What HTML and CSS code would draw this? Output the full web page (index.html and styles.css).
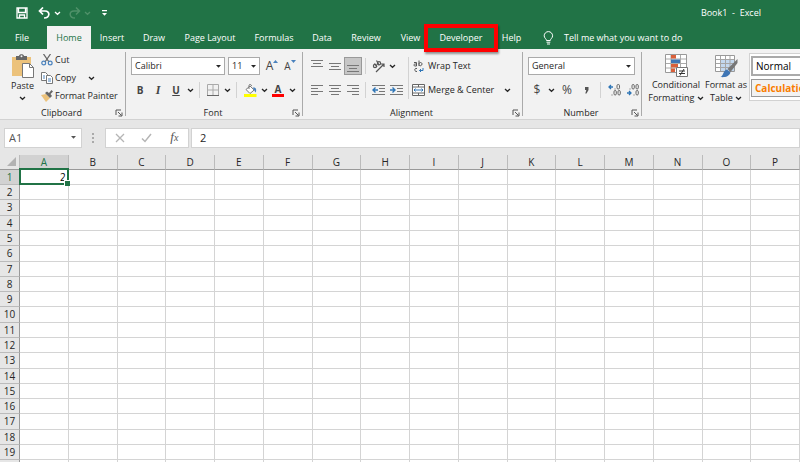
FILE: index.html
```html
<!DOCTYPE html>
<html lang="en">
<head>
    <meta charset="UTF-8">
    <meta name="viewport" content="width=device-width, initial-scale=1.0">
    <title>Book1 - Excel</title>
    <link rel="stylesheet" href="styles.css">
</head>
<body>
    <!-- shared icons -->
    <svg class="sprite" aria-hidden="true">
        <symbol id="caret" viewBox="0 0 7 5"><path d="M1 1l2.500 2.300L6 1" fill="none" stroke="currentColor" stroke-width="1.300"/></symbol>
        <symbol id="drop" viewBox="0 0 7 5"><path d="M1 1h5L3.500 3.800z" fill="currentColor"/></symbol>
        <symbol id="launch" viewBox="0 0 8 8"><path d="M1 6V1h5M3 3l3.500 3.500M7 3.500V7H3.500" fill="none" stroke="#555"/></symbol>
    </svg>

    <header class="titlebar">
        <div class="quick">
            <button class="save" aria-label="Save"><svg width="12" height="12" viewBox="0 0 12 12" fill="none" stroke="#fff" stroke-width="1.300"><path d="M1 1h10v10H1zM2.500 1v4.500h7V1M3.500 11V8h5v3"/></svg></button>
            <button class="undo" aria-label="Undo"><svg width="13" height="12" viewBox="0 0 13 12" fill="none" stroke="#fff" stroke-width="1.700"><path d="M5 .5L1.500 4L5 7.500M1.500 4H7c5.500 0 5 7-1 7"/></svg></button>
            <button class="undo-more" aria-label="Undo list"><svg width="7" height="5"><use href="#caret"/></svg></button>
            <button class="redo" aria-label="Redo"><svg width="13" height="12" viewBox="0 0 13 12" fill="none" stroke="#4f9169" stroke-width="1.500"><path d="M8 .5L11.500 4L8 7.500M11.500 4H6C.5 4 1 11 7 11"/></svg></button>
            <button class="redo-more" aria-label="Redo list"><svg width="7" height="5"><use href="#caret"/></svg></button>
            <button class="customize" aria-label="Customize toolbar"><svg width="7" height="7" viewBox="0 0 7 7" fill="#fff"><path d="M1 0h5v1.200H1zM1 3h5L3.500 5.800z"/></svg></button>
        </div>
        <div class="title">Book1&nbsp; -&nbsp; Excel</div>
    </header>

    <nav class="tabs">
        <a href="#file" class="file">File</a>
        <a href="#home" class="active">Home</a>
        <a href="#insert">Insert</a>
        <a href="#draw">Draw</a>
        <a href="#layout">Page Layout</a>
        <a href="#formulas">Formulas</a>
        <a href="#data">Data</a>
        <a href="#review">Review</a>
        <a href="#view">View</a>
        <a href="#developer" class="marked">Developer</a>
        <a href="#help">Help</a>
        <a href="#tell" class="tell"><svg width="11" height="14" viewBox="0 0 11 14" fill="none" stroke="#fff"><path d="M3.500 9.500C3.500 8 1.200 7 1.200 4.800a4.200 4.200 0 0 1 8.400 0C9.600 7 7.300 8 7.300 9.500zM3.500 11.200h3.800M4 13h3"/></svg>Tell me what you want to do</a>
    </nav>

    <main class="ribbon">
        <section class="group clipboard">
            <div class="group-body">
                <button class="big paste">
                    <svg width="23" height="24" viewBox="0 0 23 24"><path d="M1 3h19v19H1z" fill="#ecc27b"/><path d="M5 2h3c0-2.500 5-2.500 5 0h3v4H5z" fill="#666"/><circle cx="10.500" cy="2.200" r="1" fill="#f2f2f2"/><path d="M11.500 9.500h7l4 4v10h-11z" fill="#fff" stroke="#777"/><path d="M18.500 9.500v4h4" fill="none" stroke="#777"/></svg>
                    <span>Paste</span>
                    <svg width="7" height="5"><use href="#caret"/></svg>
                </button>
                <div class="clip-list">
                    <button><svg width="12" height="12" viewBox="0 0 12 12" fill="none"><path d="M2.500 0L8 8M9.500 0L4 8" stroke="#666" stroke-width="1.300"/><circle cx="2.700" cy="9" r="1.900" stroke="#4a82bd" stroke-width="1.200"/><circle cx="9.200" cy="9" r="1.900" stroke="#4a82bd" stroke-width="1.200"/></svg>Cut</button>
                    <button><svg width="12" height="12" viewBox="0 0 12 12" fill="#fff" stroke="#777"><path d="M.5.5h4l2 2v6h-6z"/><path d="M5.500 3.500h4l2 2v6h-6z"/><path d="M2 4h2M2 6h2M7 7h3M7 9h3" stroke="#4a82bd"/></svg>Copy<svg class="copy-more" width="7" height="5"><use href="#caret"/></svg></button>
                    <button><svg width="12" height="12" viewBox="0 0 12 12"><path d="M0 5l5-1 4 4-4 4z" fill="#ecc27b"/><path d="M4 3l2-1.500L8 3l2.500-3L12 1.500 9.500 4 11 6 9 8z" fill="#666"/></svg>Format Painter</button>
                </div>
            </div>
            <footer><span>Clipboard</span><button aria-label="Clipboard options"><svg width="8" height="8"><use href="#launch"/></svg></button></footer>
        </section>
        <span class="group-sep"></span>

        <section class="group font">
            <div class="group-body rows">
                <div class="row">
                    <span class="combo face"><select aria-label="Font"><option>Calibri</option></select><svg width="7" height="5"><use href="#drop"/></svg></span>
                    <span class="combo size"><select aria-label="Font size"><option>11</option></select><svg width="7" height="5"><use href="#drop"/></svg></span>
                    <button class="tool grow" aria-label="Increase font size"><span>A</span><svg width="5" height="4" viewBox="0 0 5 4"><path d="M0 3h5L2.500 0z" fill="#4a82bd"/></svg></button>
                    <button class="tool shrink" aria-label="Decrease font size"><span>A</span><svg width="5" height="4" viewBox="0 0 5 4"><path d="M0 0h5L2.500 3z" fill="#4a82bd"/></svg></button>
                </div>
                <div class="row">
                    <button class="tool"><b>B</b></button>
                    <button class="tool italic"><i>I</i></button>
                    <button class="tool"><b><u>U</u></b></button>
                    <button class="more" aria-label="Underline styles"><svg width="7" height="5"><use href="#caret"/></svg></button>
                    <span class="sep"></span>
                    <button class="tool" aria-label="Borders"><svg width="12" height="12" viewBox="0 0 12 12" fill="none"><path d="M.5 11V.5h11V11M6 1v10M1 6h10" stroke="#aaa"/><path d="M0 11.500h12" stroke="#666"/></svg></button>
                    <button class="more" aria-label="Border styles"><svg width="7" height="5"><use href="#caret"/></svg></button>
                    <span class="sep"></span>
                    <button class="tool" aria-label="Fill color"><svg width="13" height="13" viewBox="0 0 13 13"><path d="M2 5.500L6 2l4.200 4L6 9.500z" fill="#fff" stroke="#777"/><path d="M5 5V1.500C5 0 7.500 0 7.500 2" fill="none" stroke="#777"/><path d="M9 3.500c3-.5 4 2 2.500 5-.8-.6-.8-2.500-2-3z" fill="#4a82bd"/><path d="M0 10h12.500v3H0z" fill="#ff0"/></svg></button>
                    <button class="more" aria-label="Fill colors"><svg width="7" height="5"><use href="#caret"/></svg></button>
                    <button class="tool font-color" aria-label="Font color"><span>A</span></button>
                    <button class="more" aria-label="Font colors"><svg width="7" height="5"><use href="#caret"/></svg></button>
                </div>
            </div>
            <footer><span>Font</span><button aria-label="Font options"><svg width="8" height="8"><use href="#launch"/></svg></button></footer>
        </section>
        <span class="group-sep"></span>

        <section class="group alignment">
            <div class="group-body">
                <div class="rows">
                    <div class="row">
                        <button class="tool" aria-label="Top align"><svg width="12" height="14" viewBox="0 0 12 14" stroke="#777"><path d="M0 1.500h12M2 4.500h8M0 7.500h12"/></svg></button>
                        <button class="tool" aria-label="Middle align"><svg width="12" height="14" viewBox="0 0 12 14" stroke="#777"><path d="M0 4.500h12M2 7.500h8M0 10.500h12"/></svg></button>
                        <button class="tool pressed" aria-label="Bottom align"><svg width="12" height="14" viewBox="0 0 12 14" stroke="#777"><path d="M0 6.500h12M2 9.500h8M0 12.500h12"/></svg></button>
                        <span class="sep"></span>
                        <button class="tool" aria-label="Orientation"><svg width="13" height="13" viewBox="0 0 13 13" fill="none" stroke="#555" stroke-width="1.200"><path d="M4 12L12 4M9 4h3v3"/><circle cx="3" cy="6" r="1.600"/><path d="M2.500 3.500L5 7"/><circle cx="7" cy="3.300" r="1.600"/><path d="M4.500.5L7 5"/></svg></button>
                        <button class="more" aria-label="Orientation list"><svg width="7" height="5"><use href="#caret"/></svg></button>
                    </div>
                    <div class="row">
                        <button class="tool" aria-label="Align left"><svg width="12" height="10" viewBox="0 0 12 10" stroke="#777"><path d="M0 .5h12M0 3.500h7M0 6.500h12M0 9.500h7"/></svg></button>
                        <button class="tool" aria-label="Center"><svg width="12" height="10" viewBox="0 0 12 10" stroke="#777"><path d="M0 .5h12M2 3.500h8M0 6.500h12M2 9.500h8"/></svg></button>
                        <button class="tool" aria-label="Align right"><svg width="12" height="10" viewBox="0 0 12 10" stroke="#777"><path d="M0 .5h12M5 3.500h7M0 6.500h12M5 9.500h7"/></svg></button>
                        <span class="sep"></span>
                        <button class="tool" aria-label="Decrease indent"><svg width="13" height="10" viewBox="0 0 13 10" fill="none" stroke="#777"><path d="M0 .5h13M7 3.500h6M7 6.500h6M0 9.500h13"/><path d="M6 5H1M3.500 2.500L1 5l2.500 2.500" stroke="#2e75b6" stroke-width="1.400"/></svg></button>
                        <button class="tool" aria-label="Increase indent"><svg width="13" height="10" viewBox="0 0 13 10" fill="none" stroke="#777"><path d="M0 .5h13M7 3.500h6M7 6.500h6M0 9.500h13"/><path d="M0 5h5M2.500 2.500L5 5 2.500 7.500" stroke="#2e75b6" stroke-width="1.400"/></svg></button>
                    </div>
                </div>
                <span class="sep tall"></span>
                <div class="rows">
                    <button class="wide"><svg width="13" height="13" viewBox="0 0 13 13" fill="none" stroke="#555"><path d="M2 2.500h2.500V6M4.500 4H3.200C1.500 4 1.500 6 3 6h1.500M7 .5V6M7 4c0-2 3-2 3 0s-3 2.500-3 .5M5 8.500c-3-1-3 3.500 0 3"/><path d="M11 8v2.500H7.500M9 9l-1.500 1.500L9 12" stroke="#2e75b6"/></svg>Wrap Text</button>
                    <button class="wide"><svg width="13" height="12" viewBox="0 0 13 12" fill="#fff" stroke="#666"><path d="M.5.5h12v11H.5z"/><path d="M0 3h13M0 9h13M6.500 1v2M6.500 9v2"/><path d="M2 6h9M3.500 4.500L2 6l1.500 1.500M9.500 4.500L11 6 9.500 7.500" fill="none" stroke="#2e75b6"/></svg>Merge &amp; Center<svg class="merge-more" width="7" height="5"><use href="#caret"/></svg></button>
                </div>
            </div>
            <footer><span>Alignment</span><button aria-label="Alignment options"><svg width="8" height="8"><use href="#launch"/></svg></button></footer>
        </section>
        <span class="group-sep"></span>

        <section class="group number">
            <div class="group-body rows">
                <div class="row">
                    <span class="combo format"><select aria-label="Number format"><option>General</option></select><svg width="7" height="5"><use href="#drop"/></svg></span>
                </div>
                <div class="row signs">
                    <button class="tool">$</button>
                    <button class="more" aria-label="Currency list"><svg width="7" height="5"><use href="#caret"/></svg></button>
                    <button class="tool percent">%</button>
                    <button class="tool" aria-label="Comma style"><svg width="4" height="7" viewBox="0 0 4 7"><path d="M0 0h3.500v3L1.500 6.500H.3L1.300 3H0z" fill="#555"/></svg></button>
                    <span class="sep"></span>
                    <button class="tool" aria-label="Increase decimal"><svg width="13" height="12" viewBox="0 0 13 12" fill="none" stroke="#666"><path d="M5 3H1M3 1L1 3l2 2" stroke="#2e75b6" stroke-width="1.300"/><path d="M7 4.500v1M4 10.500v1"/><rect x="9" y=".5" width="2.500" height="4.500" rx="1.200"/><rect x="6" y="6.500" width="2.300" height="4.500" rx="1.200"/><rect x="10" y="6.500" width="2.300" height="4.500" rx="1.200"/></svg></button>
                    <button class="tool" aria-label="Decrease decimal"><svg width="13" height="12" viewBox="0 0 13 12" fill="none" stroke="#666"><path d="M1 9h4M3 7l2 2-2 2" stroke="#2e75b6" stroke-width="1.300"/><path d="M4 4.500v1M8 10.500v1"/><rect x="6" y=".5" width="2.300" height="4.500" rx="1.200"/><rect x="10" y=".5" width="2.300" height="4.500" rx="1.200"/><rect x="10" y="6.500" width="2.300" height="4.500" rx="1.200"/></svg></button>
                </div>
            </div>
            <footer><span>Number</span><button aria-label="Number options"><svg width="8" height="8"><use href="#launch"/></svg></button></footer>
        </section>
        <span class="group-sep"></span>

        <section class="group styles">
            <button class="big">
                <svg width="23" height="24" viewBox="0 0 23 24"><path d="M.5.5h21v18H.5z" fill="#fff" stroke="#999"/><path d="M6 1v17M15.500 1v17M1 5h20M1 9.500h20M1 14h20" stroke="#aaa"/><path d="M6 1h5v3.500H6zM6 10h7v3.500H6zM6 14.500h4V18H6z" fill="#d9603b"/><path d="M6 5.500h9V9H6z" fill="#3f76b5"/><path d="M11.500 13.500h11v9h-11z" fill="#fff" stroke="#777"/><path d="M14 17h6M14 19.500h6M19 15l-4 6.500" stroke="#333"/></svg>
                <span>Conditional</span>
                <span>Formatting <svg width="7" height="5"><use href="#caret"/></svg></span>
            </button>
            <button class="big as-table">
                <svg width="23" height="24" viewBox="0 0 23 24"><path d="M.5 1.500h19v16H.5z" fill="#fff" stroke="#999"/><path d="M5 6h14v11H5z" fill="#c3d8ee"/><path d="M5.500 2v15M10.500 2v15M15 2v15M1 5.500h18M1 9.500h18M1 13.500h18" stroke="#a5a5a5"/><path d="M22.500 5v4l-7 9-3-3z" fill="#777"/><path d="M12 15.500l3.500 3C14 23 9 23.500 5.500 23c3-1 2.500-6.500 6.500-7.500z" fill="#3f76b5"/></svg>
                <span>Format as</span>
                <span>Table <svg width="7" height="5"><use href="#caret"/></svg></span>
            </button>
            <div class="gallery">
                <button class="normal">Normal</button>
                <button class="calculation">Calculation</button>
            </div>
        </section>
    </main>

    <div class="formula-bar">
        <div class="name-box"><input type="text" value="A1" aria-label="Name box"><svg width="7" height="5"><use href="#drop"/></svg></div>
        <svg class="dots" width="2" height="10" viewBox="0 0 2 10" fill="#aaa"><path d="M0 0h2v2H0zM0 4h2v2H0zM0 8h2v2H0z"/></svg>
        <div class="entry">
            <button aria-label="Cancel"><svg width="10" height="10" viewBox="0 0 10 10" stroke="#b5b5b5" stroke-width="1.300"><path d="M1 1l8 8M9 1L1 9"/></svg></button>
            <button aria-label="Enter"><svg width="11" height="10" viewBox="0 0 11 10" fill="none" stroke="#b5b5b5" stroke-width="1.500"><path d="M1 5.500l3 3L10 1"/></svg></button>
            <button class="fx" aria-label="Insert function"><i>f<small>x</small></i></button>
        </div>
        <input class="formula" type="text" value="2" aria-label="Formula">
    </div>

    <table class="sheet" id="sheet">
        <thead>
            <tr><th class="corner"><svg width="9" height="9" viewBox="0 0 9 9"><path d="M9 0v9H0z" fill="#b2b2b2"/></svg></th></tr>
        </thead>
        <tbody></tbody>
    </table>

    <script src="script.js"></script>
</body>
</html>
```

FILE: styles.css
```css
* {
    box-sizing: border-box;
}

body {
    margin: 0;
    min-height: 100vh;
    overflow: hidden;
    background: #fff;
    color: #262626;
    font-family: "Open Sans", "Noto Sans", sans-serif;
    font-size: 9px;
    line-height: 12px;
}

button,
input,
select {
    margin: 0;
    padding: 0;
    border: 0;
    background: none;
    color: inherit;
    font: inherit;
}

svg {
    flex: none;
}

.sprite {
    display: none;
}

/* title bar */
.titlebar {
    display: flex;
    justify-content: space-between;
    align-items: center;
    height: 26px;
    padding: 0 39px 0 16px;
    background: #217346;
    color: #fff;
}

.quick {
    display: flex;
    align-items: center;
}

.quick button {
    display: flex;
    color: #fff;
}

.quick .undo,
.quick .customize {
    margin-left: 10px;
}

.quick .undo-more,
.quick .redo-more {
    margin-left: 3px;
}

.quick .redo {
    margin-left: 7px;
}

.quick .redo-more {
    color: #4f9169;
}

/* tabs */
.tabs {
    display: grid;
    grid-template-columns: 47px 44px 42px 42px 70px 58px 38px 50px 39px 62px 39px 1fr;
    height: 23px;
    background: #217346;
}

.tabs a {
    display: flex;
    align-items: center;
    justify-content: center;
    color: #fff;
    text-decoration: none;
    white-space: nowrap;
}

.tabs .file {
    padding-right: 3px;
}

.tabs .active {
    background: #f2f2f2;
    color: #217346;
}

.tabs .tell {
    justify-content: flex-start;
    gap: 10px;
    padding-left: 12px;
}

.tabs .marked {
    position: relative;
}

.marked::after {
    content: "";
    position: absolute;
    inset: -2px -6px -3px;
    border: 4px solid #f00;
    box-shadow: 1px 2px 2px rgba(0, 0, 0, 0.4);
}

/* ribbon */
.ribbon {
    display: flex;
    height: 71px;
    overflow: hidden;
    background: #f2f2f2;
    border-bottom: 1px solid #d2d2d2;
}

.group {
    display: flex;
    flex: none;
    flex-direction: column;
}

.group-sep {
    flex: none;
    width: 1px;
    margin: 3px 0;
    background: #aaa;
}

.group-body {
    display: flex;
    flex: 1;
}

.group footer {
    display: flex;
    align-items: center;
    height: 12px;
    text-align: center;
}

.group footer span {
    flex: 1;
    padding-left: 8px;
}

.group footer button {
    display: flex;
    margin-right: 2px;
}

.rows {
    display: flex;
    flex-direction: column;
    gap: 6px;
    padding-top: 8px;
}

.row {
    display: flex;
    align-items: center;
    height: 18px;
}

.sep {
    flex: none;
    width: 1px;
    height: 16px;
    margin: 0 4px;
    background: #d2d2d2;
}

.tool,
.more {
    display: flex;
    align-items: center;
    justify-content: center;
    width: 18px;
    height: 18px;
}

.more {
    width: 10px;
}

.big {
    display: flex;
    flex-direction: column;
    align-items: center;
    padding-top: 5px;
    white-space: nowrap;
}

/* clipboard */
.clipboard {
    width: 125px;
}

.paste {
    width: 29px;
    margin-left: 8px;
}

.paste span {
    margin: 2px 0 4px;
}

.clip-list {
    display: flex;
    flex-direction: column;
    align-items: flex-start;
    gap: 6px;
    padding: 5px 0 0 4px;
}

.clip-list button {
    display: flex;
    align-items: center;
    gap: 2px;
    height: 12px;
    white-space: nowrap;
}

.copy-more {
    margin-left: 10px;
}

/* font */
.font {
    width: 176px;
}

.font .group-body,
.number .group-body {
    padding-left: 5px;
}

.combo {
    position: relative;
    height: 18px;
    margin-right: 3px;
}

.combo select {
    width: 100%;
    height: 18px;
    padding: 0 3px;
    appearance: none;
    background: #fff;
    border: 1px solid #aaa;
}

.combo svg {
    position: absolute;
    top: 7px;
    right: 3px;
}

.face {
    width: 94px;
}

.size {
    width: 32px;
}

.grow span {
    font-size: 12px;
}

.shrink span {
    font-size: 10px;
}

.grow svg,
.shrink svg {
    margin-bottom: 8px;
}

.font .tool {
    color: #444;
    font-size: 10px;
}

.font .italic {
    font-family: "Liberation Serif", serif;
    font-size: 12px;
    font-weight: bold;
}

.font-color span {
    width: 12px;
    height: 13px;
    border-bottom: 3px solid #f00;
    font-weight: bold;
    line-height: 10px;
    text-align: center;
}

/* alignment */
.alignment {
    width: 219px;
}

.alignment .group-body {
    padding-left: 5px;
}

.alignment .sep {
    margin: 0 3px;
}

.alignment .rows:first-child {
    width: 97px;
}

.alignment .sep.tall {
    height: 42px;
    margin-top: 8px;
}

.tool.pressed {
    background: #c6c6c6;
    border: 1px solid #999;
}

.wide {
    display: flex;
    align-items: center;
    gap: 3px;
    height: 18px;
    white-space: nowrap;
}

.merge-more {
    margin-left: 7px;
}

/* number */
.number {
    width: 118px;
}

.format {
    width: 107px;
}

.signs .tool {
    color: #444;
    font-size: 12px;
}

.signs .percent {
    width: 22px;
}

/* styles */
.styles {
    flex: 1 0 auto;
    flex-direction: row;
    align-items: flex-start;
}

.styles .big {
    width: 60px;
    margin-left: 4px;
    gap: 1px;
}

.styles .as-table {
    width: 40px;
    margin-left: 0;
}

.gallery {
    display: flex;
    flex-direction: column;
    gap: 3px;
    width: 90px;
    height: 48px;
    margin: 4px 0 0 3px;
    padding: 2px 1px;
    background: #fff;
    border: 1px solid #d2d2d2;
}

.gallery button {
    height: 20px;
    padding-left: 3px;
    font-size: 10px;
    text-align: left;
}

.gallery .normal {
    border: 2px solid #aaa;
    color: #000;
}

.gallery .calculation {
    height: 18px;
    border: 1px solid #999;
    background: #f2f2f2;
    color: #fa7d00;
    font-weight: bold;
}

/* formula bar */
.formula-bar {
    display: flex;
    align-items: center;
    height: 35px;
    padding-left: 4px;
    background: #e6e6e6;
}

.name-box,
.entry,
.formula {
    height: 20px;
    background: #fff;
    border: 1px solid #d2d2d2;
}

.name-box {
    display: flex;
    align-items: center;
    width: 78px;
    padding: 0 4px;
    color: #555;
}

.name-box input {
    flex: 1;
    min-width: 0;
    font-size: 11px;
}

.dots {
    margin: 0 11px 0 10px;
}

.entry {
    display: flex;
    width: 84px;
}

.entry button {
    display: flex;
    flex: 1;
    align-items: center;
    justify-content: center;
}

.entry .fx {
    color: #555;
    font-family: "Liberation Serif", serif;
    font-size: 13px;
}

.fx small {
    font-size: 10px;
}

.formula {
    flex: 1;
    margin-left: 2px;
    padding-left: 8px;
    font-size: 11px;
}

/* sheet */
.sheet {
    width: 100%;
    table-layout: fixed;
    border-collapse: separate;
    border-spacing: 0;
    font-size: 10px;
    line-height: 13px;
}

.sheet th,
.sheet td {
    height: 15px;
    padding: 0;
    border: solid #d4d4d4;
    border-width: 0 1px 1px 0;
}

.sheet th {
    background: #e6e6e6;
    font-weight: normal;
}

.sheet thead th {
    border-right-color: #bbb;
    border-bottom-color: #999;
}

.sheet tbody th {
    border-right-color: #999;
    border-bottom-color: #bbb;
}

.sheet .corner {
    width: 20px;
    border-right-color: #bbb;
    line-height: 0;
    text-align: right;
    vertical-align: bottom;
}

.corner svg {
    margin: 0 3px 3px 0;
}

/* every few rows are one pixel taller */
.sheet tbody tr:nth-child(7n + 3) > *,
.sheet tbody tr:nth-child(7n + 6) > * {
    height: 16px;
}

.sheet th.picked {
    background: #d2d2d2;
    color: #217346;
}

.sheet td.current {
    position: relative;
    padding-right: 2px;
    color: #000;
    text-align: right;
}

.current::before {
    content: "";
    position: absolute;
    inset: -2px -1px -1px -1px;
    border: 2px solid #217346;
}

.current::after {
    content: "";
    position: absolute;
    right: -2px;
    bottom: -2px;
    width: 5px;
    height: 5px;
    background: #217346;
    border: solid #fff;
    border-width: 1px 0 0 1px;
}
```

FILE: script.js
```js
// build the column headings and the rows of the sheet
const columns = 'ABCDEFGHIJKLMNOP'.split('');
const rowCount = 19;
const values = { A1: '2' };
const current = 'A1';

const headRow = document.querySelector('#sheet thead tr');
const body = document.querySelector('#sheet tbody');

columns.forEach(function (name) {
    const th = document.createElement('th');
    th.textContent = name;
    if (current[0] === name) th.className = 'picked';
    headRow.appendChild(th);
});

for (let r = 1; r <= rowCount + 1; r++) {
    const tr = body.insertRow();
    const th = document.createElement('th');
    th.textContent = r <= rowCount ? r : '';
    if (current === 'A' + r) th.className = 'picked';
    tr.appendChild(th);
    columns.forEach(function (name) {
        const td = tr.insertCell();
        td.textContent = values[name + r] || '';
        if (name + r === current) td.className = 'current';
    });
}
```
